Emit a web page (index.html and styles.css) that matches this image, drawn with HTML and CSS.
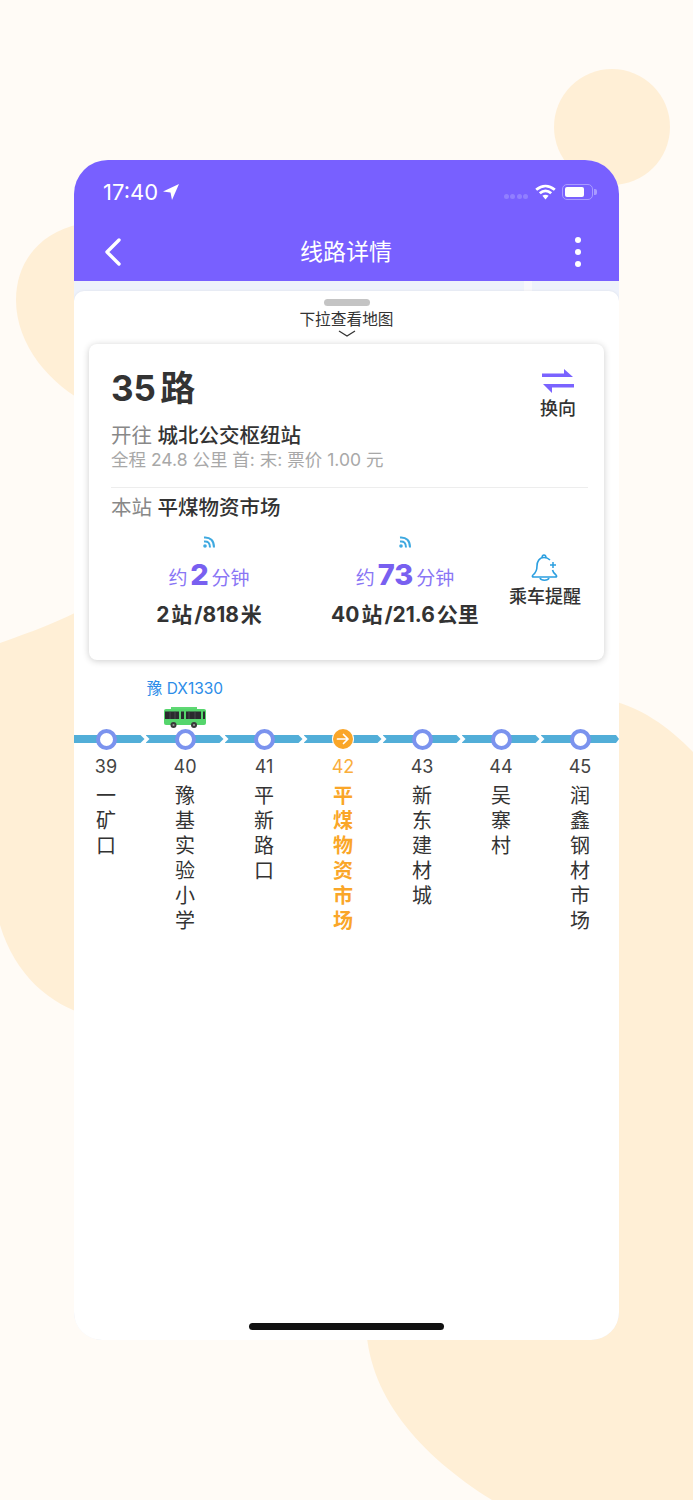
FILE: index.html
```html
<!DOCTYPE html>
<html lang="zh-CN">
<head>
    <meta charset="UTF-8">
    <meta name="viewport" content="width=device-width, initial-scale=1.0">
    <title>线路详情</title>
    <link rel="stylesheet" href="styles.css">
</head>
<body>
    <!-- background blobs -->
    <svg class="blobs" width="693" height="1500" viewBox="0 0 693 1500">
        <circle cx="612" cy="127" r="58" fill="#FFEFD6"/>
        <path d="M80 224 C40 232 16 262 16 300 C16 345 50 385 90 405 Z" fill="#FFEFD6"/>
        <path d="M0 643 C30 632 60 622 90 605 L90 1016 C50 1005 15 975 0 925 Z" fill="#FFEFD6"/>
        <path d="M600 698 C640 705 670 728 693 752 L693 1500 L492 1500 C420 1455 366 1395 366 1320 L600 1320 Z" fill="#FFEFD6"/>
    </svg>

    <div class="phone">
        <div class="top">
            <div class="status">
                <div class="status-left">
                    <span>17:40</span>
                    <svg width="18" height="18" viewBox="0 0 18 18"><path d="M17 1 L1 8.500 L8.500 9.500 L10 17 Z" fill="#fff"/></svg>
                </div>
                <div class="status-right">
                    <div class="signal"><i></i><i></i><i></i><i></i></div>
                    <svg width="21" height="16" viewBox="0 0 21 16">
                        <path d="M1.200 5.800 C7 0.800 14 0.800 19.800 5.800" fill="none" stroke="#fff" stroke-width="2.800"/>
                        <path d="M4.800 9.200 C8.200 6.200 12.800 6.200 16.200 9.200" fill="none" stroke="#fff" stroke-width="2.800"/>
                        <path d="M7.400 11.800 C9.400 10.400 11.600 10.400 13.600 11.800 L10.500 15.500 Z" fill="#fff"/>
                    </svg>
                    <div class="battery"><b></b></div>
                </div>
            </div>
            <div class="nav">
                <svg width="20" height="30" viewBox="0 0 20 30"><path d="M16 3 L4 15 L16 27" fill="none" stroke="#fff" stroke-width="3.400" stroke-linecap="round" stroke-linejoin="round"/></svg>
                <h1>线路详情</h1>
                <div class="more"><i></i><i></i><i></i></div>
            </div>
        </div>

        <div class="band"></div>

        <div class="sheet">
            <div class="handle"></div>
            <p class="pull">下拉查看地图</p>
            <svg class="pull-arrow" width="18" height="7" viewBox="0 0 18 7"><path d="M1 1 L9 6 L17 1" fill="none" stroke="#333" stroke-width="1.300"/></svg>

            <div class="card">
                <div class="card-head">
                    <div class="route">
                        <h2>35 路</h2>
                        <p class="dest"><span>开往</span> 城北公交枢纽站</p>
                        <p class="meta">全程 24.8 公里 首: 末: 票价 1.00 元</p>
                    </div>
                    <div class="swap">
                        <svg width="32" height="25" viewBox="0 0 32 25">
                            <path d="M0 5.500 H22 V1 L31 9 H0 Z" fill="#7A63FF"/>
                            <path d="M32 16 V19.500 H10 V25 L1 16 Z" fill="#7A63FF"/>
                        </svg>
                        <span>换向</span>
                    </div>
                </div>
                <p class="this-stop"><span>本站</span> 平煤物资市场</p>
                <div class="arrivals">
                    <div class="arrival arrival-first">
                        <svg width="14" height="14" viewBox="0 0 14 14">
                            <circle cx="3" cy="11" r="1.800" fill="#3FA9E0"/>
                            <path d="M2 6.500 C6 6 8 8 8 12.500" fill="none" stroke="#3FA9E0" stroke-width="2"/>
                            <path d="M2 2.500 C8.500 2 12 5.500 12 12.500" fill="none" stroke="#3FA9E0" stroke-width="2"/>
                        </svg>
                        <p class="eta">约 <b>2</b> 分钟</p>
                        <p class="dist">2 站 /818 米</p>
                    </div>
                    <div class="arrival arrival-second">
                        <svg width="14" height="14" viewBox="0 0 14 14">
                            <circle cx="3" cy="11" r="1.800" fill="#3FA9E0"/>
                            <path d="M2 6.500 C6 6 8 8 8 12.500" fill="none" stroke="#3FA9E0" stroke-width="2"/>
                            <path d="M2 2.500 C8.500 2 12 5.500 12 12.500" fill="none" stroke="#3FA9E0" stroke-width="2"/>
                        </svg>
                        <p class="eta">约 <b>73</b> 分钟</p>
                        <p class="dist">40 站 /21.6 公里</p>
                    </div>
                    <div class="remind">
                        <svg width="28" height="30" viewBox="0 0 28 30">
                            <path d="M13 2 C15 2 15 4 15 5 M13 2 C11 2 11 4 11 5" fill="none" stroke="#2B9FE0" stroke-width="1.500"/>
                            <path d="M19 7 C17 5 15 4.500 13 4.500 C8 4.500 6 9 6 13 C6 18 4.500 20 2 22 C1 23 1 24 3 24 H24 C26 24 26 23 25 22 C23 20.500 22 19 21.500 17" fill="none" stroke="#2B9FE0" stroke-width="1.600"/>
                            <path d="M9 25 C10 28 17 28 18 25" fill="none" stroke="#2B9FE0" stroke-width="1.600"/>
                            <path d="M22 9 V15 M19 12 H25" stroke="#2B9FE0" stroke-width="1.500"/>
                        </svg>
                        <span>乘车提醒</span>
                    </div>
                </div>
            </div>

            <div class="stops">
                <div class="stop">
                    <div class="bus-slot"></div>
                    <div class="track"><div class="seg seg-first"></div><div class="node"></div></div>
                    <div class="num">39</div>
                    <div class="name">一矿口</div>
                </div>
                <div class="stop">
                    <div class="bus-slot">
                        <span class="plate">豫 DX1330</span>
                        <svg class="bus" width="43" height="23" viewBox="0 0 43 23">
                            <path d="M7 1 H33 V3 H7 Z" fill="#5FD873"/>
                            <path d="M2 3 H40 Q42 3 42 5 V17 Q42 19 40 19 H2 Q0 19 0 17 V5 Q0 3 2 3 Z" fill="#55D56C"/>
                            <path d="M1 5.500 H41 V13 H1 Z" fill="#2A2A2E"/>
                            <path d="M6 5.500 V13 M11 5.500 V13 M25 5.500 V13 M31 5.500 V13" stroke="#55585A" stroke-width="0.700"/>
                            <path d="M15 5 H17 V19 H15 Z M20 5 H22 V19 H20 Z M37 5 H39 V15 H37 Z" fill="#55D56C"/>
                            <circle cx="9.500" cy="19" r="3" fill="#3A3A3A"/>
                            <circle cx="30" cy="19" r="3" fill="#3A3A3A"/>
                            <circle cx="9.500" cy="19" r="1.100" fill="#999"/>
                            <circle cx="30" cy="19" r="1.100" fill="#999"/>
                        </svg>
                    </div>
                    <div class="track"><div class="seg"></div><div class="node"></div></div>
                    <div class="num">40</div>
                    <div class="name">豫基实验小学</div>
                </div>
                <div class="stop">
                    <div class="bus-slot"></div>
                    <div class="track"><div class="seg"></div><div class="node"></div></div>
                    <div class="num">41</div>
                    <div class="name">平新路口</div>
                </div>
                <div class="stop stop-current">
                    <div class="bus-slot"></div>
                    <div class="track">
                        <div class="seg"></div>
                        <div class="node-current">
                            <svg width="14" height="14" viewBox="0 0 14 14"><path d="M1.500 7 H12 M7.500 2.500 L12 7 L7.500 11.500" fill="none" stroke="#fff" stroke-width="1.700" stroke-linecap="round" stroke-linejoin="round"/></svg>
                        </div>
                    </div>
                    <div class="num">42</div>
                    <div class="name">平煤物资市场</div>
                </div>
                <div class="stop">
                    <div class="bus-slot"></div>
                    <div class="track"><div class="seg"></div><div class="node"></div></div>
                    <div class="num">43</div>
                    <div class="name">新东建材城</div>
                </div>
                <div class="stop">
                    <div class="bus-slot"></div>
                    <div class="track"><div class="seg"></div><div class="node"></div></div>
                    <div class="num">44</div>
                    <div class="name">吴寨村</div>
                </div>
                <div class="stop">
                    <div class="bus-slot"></div>
                    <div class="track"><div class="seg seg-last"></div><div class="node"></div></div>
                    <div class="num">45</div>
                    <div class="name">润鑫钢材市场</div>
                </div>
            </div>

            <div class="home-bar"></div>
        </div>
    </div>
</body>
</html>
```

FILE: styles.css
```css
* {
    box-sizing: border-box;
    margin: 0;
    padding: 0;
    font-family: Inter, 'Noto Sans CJK SC', sans-serif;
}

body {
    position: relative;
    width: 693px;
    height: 1500px;
    overflow: hidden;
    background-color: #FFFBF6;
    padding: 160px 74px 0;
}

.blobs {
    position: absolute;
    top: 0;
    left: 0;
}

.phone {
    position: relative;
    width: 545px;
    height: 1180px;
    display: flex;
    flex-direction: column;
    border-radius: 34px 34px 28px 28px;
    overflow: hidden;
    background-color: #EEF2FB;
}

.top {
    height: 121px;
    background-color: #7860FF;
    color: #fff;
}

.status {
    height: 65px;
    padding: 18px 26px 0 29px;
    display: flex;
    justify-content: space-between;
    align-items: flex-start;
}

.status-left {
    display: flex;
    align-items: center;
    gap: 4px;
    font-size: 22px;
    line-height: 28px;
}

.status-right {
    display: flex;
    align-items: center;
    gap: 6px;
    height: 28px;
}

.signal {
    display: flex;
    gap: 1.500px;
    margin: 9px 1px 0 0;
}

.signal i {
    width: 5px;
    height: 5px;
    border-radius: 50%;
    background-color: #917FFF;
}

.battery {
    position: relative;
    width: 31px;
    height: 16px;
    border: 1.500px solid #A99BFF;
    border-radius: 5px;
    padding: 1.500px;
}

.battery b {
    display: block;
    width: 19px;
    height: 10px;
    border-radius: 2px;
    background-color: #fff;
}

.battery::after {
    content: "";
    position: absolute;
    right: -4.500px;
    top: 3.500px;
    width: 2.500px;
    height: 6px;
    background-color: #A99BFF;
    border-radius: 0 2px 2px 0;
}

.nav {
    height: 56px;
    padding: 0 38px 2px 29px;
    display: grid;
    grid-template-columns: 1fr auto 1fr;
    align-items: center;
}

.nav h1 {
    font-size: 23px;
    font-weight: 400;
    margin: 0 0 4px 8px;
}

.more {
    justify-self: end;
    display: flex;
    flex-direction: column;
    gap: 6px;
}

.more i {
    width: 6px;
    height: 6px;
    border-radius: 50%;
    background-color: #fff;
}

.band {
    height: 10px;
    background: linear-gradient(to right, #EEF2FB 450px, #F8F8FB 450px, #F8F8FB 458px, #EEF2FB 458px);
}

.sheet {
    position: relative;
    flex: 1;
    display: flex;
    flex-direction: column;
    align-items: center;
    background-color: #fff;
    border-radius: 10px 10px 0 0;
    box-shadow: 0 0 3px rgba(0, 0, 0, 0.08);
    padding-top: 8px;
}

.handle {
    width: 46px;
    height: 7px;
    border-radius: 4px;
    background-color: #C4C4C4;
}

.pull {
    font-size: 15.700px;
    line-height: 20px;
    color: #333;
    margin-top: 4px;
}

.pull-arrow {
    display: block;
}

.card {
    width: 515px;
    height: 316px;
    margin-top: 7px;
    padding: 21px 16px 0 22px;
    background-color: #fff;
    border-radius: 8px;
    box-shadow: 0 1px 7px rgba(0, 0, 0, 0.2);
}

.card-head {
    display: flex;
    justify-content: space-between;
    border-bottom: 1px solid #EDEDED;
    height: 123px;
}

.route h2 {
    font-size: 35px;
    line-height: 47px;
    font-weight: 700;
    color: #333;
    word-spacing: -4px;
}

.dest {
    font-size: 20.500px;
    line-height: 27px;
    margin-top: 10px;
    color: #333;
    font-weight: 500;
}

.dest span,
.this-stop span {
    color: #888;
    font-weight: 400;
}

.meta {
    font-size: 17.500px;
    line-height: 22px;
    color: #A8A8A8;
}

.swap {
    display: flex;
    flex-direction: column;
    align-items: center;
    margin: 3px 12px 0 0;
}

.swap span {
    font-size: 18px;
    line-height: 26px;
    color: #333;
    font-weight: 500;
    margin-top: 3px;
}

.this-stop {
    font-size: 20.500px;
    line-height: 28px;
    margin-top: 6px;
    color: #333;
    font-weight: 500;
}

.arrivals {
    display: flex;
    margin-top: 13px;
    position: relative;
}

.arrival {
    display: flex;
    flex-direction: column;
    align-items: center;
}

.arrival-first {
    width: 196px;
}

.arrival-second {
    width: 196px;
}

.eta {
    font-size: 19px;
    line-height: 36px;
    color: #8A76F5;
    margin-top: 8px;
    word-spacing: -2.500px;
}

.eta b {
    font-size: 29px;
    font-weight: 800;
    color: #7860F0;
}

.dist {
    font-size: 21px;
    line-height: 30px;
    font-weight: 700;
    color: #333;
    margin-top: 3px;
    word-spacing: -3px;
}

.remind {
    display: flex;
    flex-direction: column;
    align-items: center;
    margin: 18px 0 0 6px;
}

.remind span {
    font-size: 18px;
    line-height: 26px;
    color: #333;
    font-weight: 500;
    margin-top: 1px;
}

.stops {
    display: flex;
    align-self: flex-start;
    margin: 19px 0 0 -7.500px;
}

.stop {
    position: relative;
    width: 79px;
    display: flex;
    flex-direction: column;
    align-items: center;
}

.bus-slot {
    height: 50px;
    display: flex;
    flex-direction: column;
    align-items: center;
    width: 100%;
}

.plate {
    font-size: 15.500px;
    line-height: 20px;
    color: #2C8CE8;
    white-space: nowrap;
}

.bus {
    display: block;
    margin-top: 7px;
}

.track {
    position: relative;
    width: 100%;
    height: 20px;
    display: flex;
    align-items: center;
    justify-content: center;
}

.seg {
    position: absolute;
    left: 0;
    right: 0;
    top: 6px;
    height: 8px;
    background-color: #52AED8;
    clip-path: polygon(0 0, calc(100% - 5px) 0, calc(100% - 1px) 50%, calc(100% - 5px) 100%, 0 100%, 4px 50%);
}

.seg-first {
    clip-path: polygon(0 0, calc(100% - 5px) 0, calc(100% - 1px) 50%, calc(100% - 5px) 100%, 0 100%);
}

.seg-last {
    right: 0.500px;
    clip-path: polygon(0 0, calc(100% - 3px) 0, 100% 50%, calc(100% - 3px) 100%, 0 100%, 4px 50%);
}

.node {
    position: relative;
    flex: none;
    width: 21px;
    height: 21px;
    border: 4px solid #7B93EE;
    border-radius: 50%;
    background-color: #fff;
}

.node-current {
    position: relative;
    width: 20px;
    height: 20px;
    border-radius: 50%;
    background-color: #FAA628;
    box-shadow: 0 0 0 1px #fff;
    display: flex;
    align-items: center;
    justify-content: center;
}

.num {
    font-size: 18px;
    line-height: 26px;
    color: #444;
    margin-top: 5px;
}

.name {
    width: 20px;
    font-size: 20px;
    line-height: 25px;
    color: #333;
    text-align: center;
    margin-top: 4px;
}

.stop-current .num {
    color: #FAAE3C;
}

.stop-current .name {
    color: #FAA628;
    font-weight: 700;
}

.home-bar {
    position: absolute;
    left: 175px;
    bottom: 10px;
    width: 195px;
    height: 7px;
    border-radius: 4px;
    background-color: #111;
}
```
